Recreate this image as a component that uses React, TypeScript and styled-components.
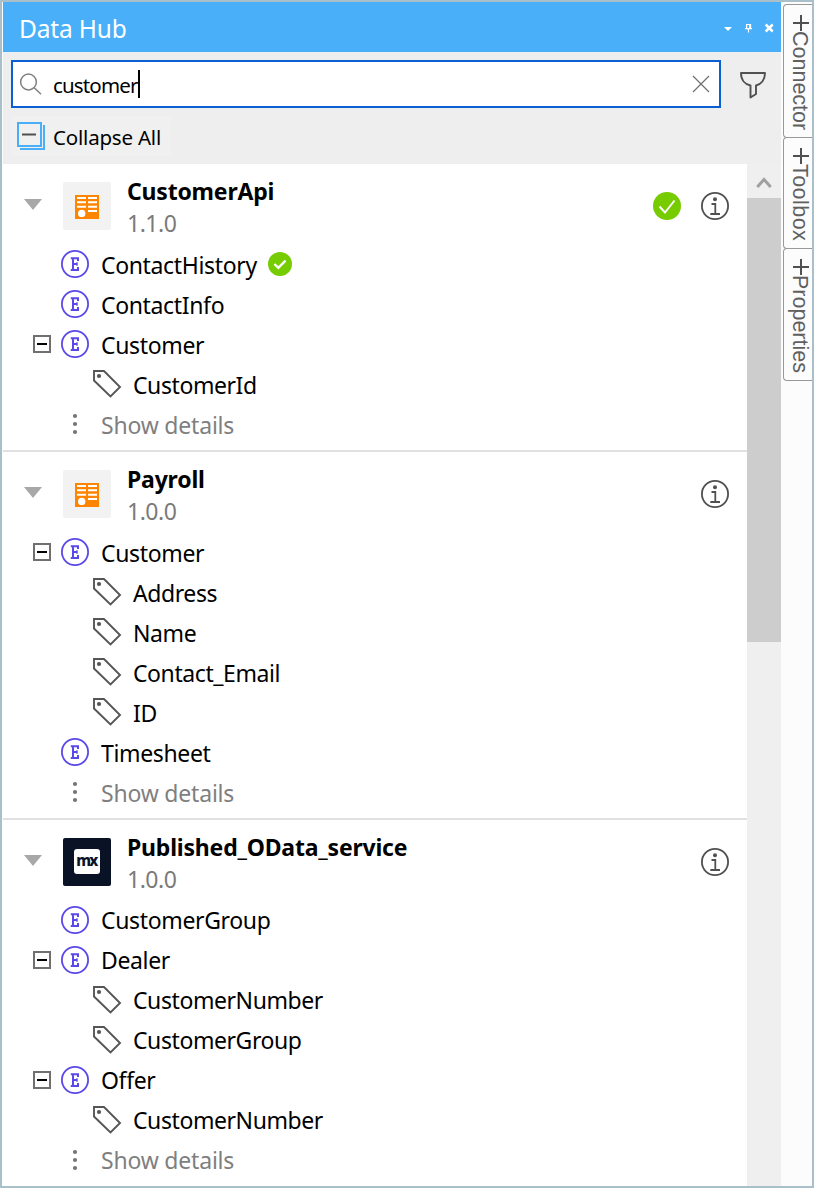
import React from 'react';
import styled, { createGlobalStyle } from 'styled-components';

const GlobalStyle = createGlobalStyle`
  * { box-sizing: border-box; }
  body { margin: 0; background: #fff; font-family: 'Noto Sans', sans-serif; }
  svg { display: block; flex: none; }
`;

const Window = styled.div`
  display: flex;
  width: 814px;
  height: 1188px;
  border: 2px solid #a9bfca;
  padding-left: 1px;
  background: #fcfcfc;
  overflow: hidden;
`;

const Panel = styled.section`
  display: flex;
  flex-direction: column;
  width: 778px;
`;

const TitleBar = styled.header`
  display: flex;
  align-items: center;
  height: 50px;
  padding: 0 7px 0 16px;
  background: #49aff8;
  color: #fff;
`;

const PanelTitle = styled.h1`
  flex: 1;
  margin: 0;
  padding-top: 4px;
  font-size: 24.5px;
  font-weight: 400;
  line-height: 46px;
  letter-spacing: -0.15px;
`;

const Toolbar = styled.div`
  height: 112px;
  padding: 8px 0 0 8px;
  background: #eeeeee;
`;

const SearchRow = styled.div`
  display: flex;
  align-items: center;
  height: 48px;
`;

const SearchBox = styled.div`
  display: flex;
  align-items: center;
  width: 710px;
  height: 48px;
  padding: 0 9px 0 6px;
  border: 2px solid #0a60d0;
  background: #fff;
`;

const Query = styled.span`
  flex: 1;
  display: flex;
  align-items: center;
  padding: 2px 0 0 11px;
  font-size: 20.5px;
  line-height: 42px;
  letter-spacing: -0.85px;
`;

const Caret = styled.i`
  width: 2px;
  height: 28px;
  margin-bottom: 2px;
  background: #000;
`;

const FilterButton = styled.div`
  display: flex;
  align-items: center;
  justify-content: center;
  width: 60px;
  height: 48px;
  padding: 2px 0 0 4px;
`;

const CollapseButton = styled.div`
  display: flex;
  align-items: center;
  gap: 8px;
  width: 160px;
  height: 40px;
  margin-top: 8px;
  padding-left: 6px;
  background: #f0f0f0;
  font-size: 20.5px;
  letter-spacing: -0.2px;
  white-space: nowrap;
`;

const CollapseText = styled.span`
  padding-top: 2px;
`;

const Content = styled.div`
  display: flex;
  flex: 1;
`;

const List = styled.div`
  width: 744px;
  background: #fff;
`;

const Scrollbar = styled.div`
  width: 34px;
  background: #efefef;
`;

const ScrollUp = styled.div`
  display: flex;
  align-items: center;
  justify-content: center;
  height: 34px;
  padding-top: 4px;
`;

const Thumb = styled.div`
  height: 444px;
  background: #cdcdcd;
`;

const ServiceHead = styled.div`
  display: flex;
  align-items: flex-start;
  height: 80px;
  padding: 18px 18px 0 21px;
`;

const Arrow = styled.svg`
  margin: 17px 21px 0 0;
`;

const Logo = styled.div<{ $dark?: boolean }>`
  display: flex;
  align-items: center;
  justify-content: center;
  width: 48px;
  height: 48px;
  padding-top: ${p => (p.$dark ? 0 : 2)}px;
  border-radius: 2px;
  background: ${p => (p.$dark ? '#0a1326' : '#f2f2f2')};
`;

const MxBadge = styled.div`
  width: 26px;
  height: 25px;
  margin-bottom: 2px;
  border-radius: 3px;
  background: #fff;
  color: #0a1326;
  font-size: 15px;
  font-weight: 800;
  line-height: 22px;
  letter-spacing: -1.7px;
  text-indent: -1px;
  text-align: center;
`;

const Heading = styled.div`
  flex: 1;
  padding-left: 16px;
`;

const Name = styled.div`
  margin-top: -7px;
  font-size: 23px;
  font-weight: 700;
  line-height: 32px;
  letter-spacing: -0.2px;
`;

const Version = styled.div`
  font-size: 23px;
  line-height: 32px;
  letter-spacing: -0.5px;
  color: #7a7a7a;
`;

const Status = styled.div`
  display: flex;
  gap: 20px;
  padding-top: 10px;
`;

const Label = styled.span`
  padding: 2px 11px 0 12px;
  font-size: 23px;
  line-height: 36px;
`;

const Row = styled.div<{ $indent?: boolean; $muted?: boolean }>`
  display: flex;
  align-items: center;
  height: 40px;
  padding-left: ${p => (p.$indent ? 89 : 30)}px;
  color: ${p => (p.$muted ? '#7f7f7f' : '#000')};

  ${Label} {
    padding-left: ${p => (p.$indent ? 11 : 12)}px;
    letter-spacing: ${p => (p.$muted ? -0.2 : p.$indent ? -0.42 : -0.35)}px;
  }
`;

const Service = styled.article<{ $last?: boolean }>`
  padding-bottom: 6px;
  border-bottom: ${p => (p.$last ? 'none' : '2px solid #e0e0e0')};

  ${Label} {
    padding-top: ${p => (p.$last ? 0 : 2)}px;
  }
`;

const Toggle = styled.div`
  width: 28px;
`;

const Tabs = styled.aside`
  width: 31px;
  padding: 2px 0 0 2px;
`;

const Tab = styled.div<{ $height: number }>`
  display: flex;
  flex-direction: column;
  align-items: flex-start;
  height: ${p => p.$height}px;
  padding: 10px 0 0 9px;
  border: 1px solid #999;
  border-right: 0;
  border-top-left-radius: 4px;
  border-bottom-left-radius: 4px;
  margin-bottom: -1px;
`;

const TabText = styled.span<{ $spacing?: number }>`
  margin: -1px 0 0 -6px;
  writing-mode: vertical-rl;
  font-family: 'Liberation Sans', sans-serif;
  font-size: 21.5px;
  font-kerning: none;
  line-height: 26px;
  letter-spacing: ${p => p.$spacing ?? 0}px;
  color: #606060;
`;

const CheckIcon = ({ size }: { size: number }) => (
  <svg width={size} height={size} viewBox="0 0 28 28">
    <circle cx="14" cy="14" r="14" fill="#76cc00" />
    <path
      d={size > 25 ? 'M6.5 14.5 L12 20.5 L21.5 8.5' : 'M7.5 14 L12 18.5 L20.5 10'}
      fill="none"
      stroke="#fff"
      strokeWidth={size > 25 ? 1.9 : 2.7}
    />
  </svg>
);

const InfoIcon = () => (
  <svg width="28" height="28" viewBox="0 0 28 28" fill="none" stroke="#505050">
    <circle cx="14" cy="14" r="13.1" strokeWidth="1.8" />
    <circle cx="14" cy="7.2" r="2" fill="#505050" stroke="none" />
    <path d="M10.5 12H14.3V22M9.3 22H19" strokeWidth="1.8" />
  </svg>
);

const EntityIcon = () => (
  <svg width="28" height="28" viewBox="0 0 28 28" fill="none" stroke="#5b48e8">
    <circle cx="14" cy="14" r="13.1" strokeWidth="1.8" />
    <path d="M9.8 8.2H17V11M9.8 20H17V17M12 8.2V20M12 14H16" strokeWidth="2" />
    <path d="M16 12.2V15.8" strokeWidth="1.4" />
  </svg>
);

const TagIcon = () => (
  <svg width="30" height="30" viewBox="0 0 30 30" fill="none" stroke="#555">
    <path d="M2 2H12L28 18L18.5 27.5L2 11.5Z" strokeWidth="1.9" />
    <circle cx="7" cy="7" r="2.1" fill="#555" stroke="none" />
  </svg>
);

const MinusBox = () => (
  <svg width="18" height="18" viewBox="0 0 18 18">
    <rect x="1" y="1" width="16" height="16" fill="#fff" stroke="#707070" strokeWidth="2" />
    <path d="M4 9H14" stroke="#000" strokeWidth="2" />
  </svg>
);

const DotsIcon = () => (
  <svg width="28" height="28" viewBox="0 0 28 28" fill="#757575">
    <circle cx="14" cy="6" r="2.1" />
    <circle cx="14" cy="14" r="2.1" />
    <circle cx="14" cy="22" r="2.1" />
  </svg>
);

const ServiceIcon = () => (
  <svg width="24" height="24" viewBox="0 0 24 24">
    <path fill="#ff8500" d="M0 0H24V24H0Z" />
    <path stroke="#fff" strokeWidth="2" d="M2 3H11M13 3H22M2 7.3H11M13 7.3H22M2 11.7H11M13 11.7H22M13 16H22" />
    <circle cx="6.7" cy="18.4" r="3.7" fill="#fff" />
  </svg>
);

const PlusIcon = () => (
  <svg width="16" height="17" viewBox="0 0 16 17">
    <path d="M0 8H16M8 0V16" stroke="#505050" strokeWidth="2" />
  </svg>
);

type Item = { kind: 'entity' | 'attribute'; name: string; open?: boolean; checked?: boolean };
type ServiceData = { name: string; version: string; logo: 'service' | 'mx'; checked?: boolean; items: Item[] };

const entity = (name: string, extra: Partial<Item> = {}): Item => ({ kind: 'entity', name, ...extra });
const attribute = (name: string): Item => ({ kind: 'attribute', name });

const services: ServiceData[] = [
  {
    name: 'CustomerApi',
    version: '1.1.0',
    logo: 'service',
    checked: true,
    items: [
      entity('ContactHistory', { checked: true }),
      entity('ContactInfo'),
      entity('Customer', { open: true }),
      attribute('CustomerId'),
    ],
  },
  {
    name: 'Payroll',
    version: '1.0.0',
    logo: 'service',
    items: [
      entity('Customer', { open: true }),
      attribute('Address'),
      attribute('Name'),
      attribute('Contact_Email'),
      attribute('ID'),
      entity('Timesheet'),
    ],
  },
  {
    name: 'Published_OData_service',
    version: '1.0.0',
    logo: 'mx',
    items: [
      entity('CustomerGroup'),
      entity('Dealer', { open: true }),
      attribute('CustomerNumber'),
      attribute('CustomerGroup'),
      entity('Offer', { open: true }),
      attribute('CustomerNumber'),
    ],
  },
];

const ItemRow = ({ item }: { item: Item }) =>
  item.kind === 'attribute' ? (
    <Row $indent>
      <TagIcon />
      <Label>{item.name}</Label>
    </Row>
  ) : (
    <Row>
      <Toggle>{item.open && <MinusBox />}</Toggle>
      <EntityIcon />
      <Label>{item.name}</Label>
      {item.checked && <CheckIcon size={24} />}
    </Row>
  );

const ServiceBlock = ({ data, last }: { data: ServiceData; last: boolean }) => (
  <Service $last={last}>
    <ServiceHead>
      <Arrow width="18" height="11" viewBox="0 0 18 11">
        <path d="M0 0H18L9 11Z" fill="#a8a8a8" />
      </Arrow>
      <Logo $dark={data.logo === 'mx'}>
        {data.logo === 'mx' ? <MxBadge>mx</MxBadge> : <ServiceIcon />}
      </Logo>
      <Heading>
        <Name>{data.name}</Name>
        <Version>{data.version}</Version>
      </Heading>
      <Status>
        {data.checked && <CheckIcon size={28} />}
        <InfoIcon />
      </Status>
    </ServiceHead>
    {data.items.map((item, i) => (
      <ItemRow key={i} item={item} />
    ))}
    <Row $muted>
      <Toggle />
      <DotsIcon />
      <Label>Show details</Label>
    </Row>
  </Service>
);

export default function App() {
  return (
    <>
      <GlobalStyle />
      <Window>
        <Panel>
          <TitleBar>
            <PanelTitle>Data Hub</PanelTitle>
            <svg width="50" height="16" viewBox="0 0 50 16">
              <path d="M0 8H8L4 12Z" fill="#fff" />
              <path d="M22.6 9.5V5.5H26V9.5M21 9.7H28M24.5 9.7V13.5" fill="none" stroke="#fff" strokeWidth="1.2" />
              <path d="M26.2 5V9.5" stroke="#fff" strokeWidth="2" />
              <path d="M41.7 5.5L48.7 12.5M48.7 5.5L41.7 12.5" stroke="#fff" strokeWidth="2.5" />
            </svg>
          </TitleBar>
          <Toolbar>
            <SearchRow>
              <SearchBox>
                <svg width="23" height="22" viewBox="0 0 23 22" fill="none" stroke="#808080" strokeWidth="1.5">
                  <circle cx="9.5" cy="9" r="7.9" />
                  <path d="M15 14.5L22 21.3" />
                </svg>
                <Query>
                  customer
                  <Caret />
                </Query>
                <svg width="18" height="18" viewBox="0 0 18 18">
                  <path d="M1 1L17 17M17 1L1 17" stroke="#707070" strokeWidth="1.2" />
                </svg>
              </SearchBox>
              <FilterButton>
                <svg width="26" height="27" viewBox="0 0 26 27" fill="none" stroke="#505050" strokeWidth="1.9">
                  <path d="M1 1H25C25 8 21 12.5 16 13.5V22L10.5 25.5V13.5C5 12.5 1 8 1 1Z" strokeLinejoin="round" />
                </svg>
              </FilterButton>
            </SearchRow>
            <CollapseButton>
              <svg width="28" height="28" viewBox="0 0 28 28" fill="none" stroke="#49aff8" strokeWidth="2">
                <path d="M1 1H24V24H1ZM27 3V27H3" />
                <path d="M5 12.5H19" stroke="#505050" />
              </svg>
              <CollapseText>Collapse All</CollapseText>
            </CollapseButton>
          </Toolbar>
          <Content>
            <List>
              {services.map((s, i) => (
                <ServiceBlock key={s.name} data={s} last={i === services.length - 1} />
              ))}
            </List>
            <Scrollbar>
              <ScrollUp>
                <svg width="16" height="12" viewBox="0 0 16 12">
                  <path d="M1.3 10L8 2.5L14.7 10" fill="none" stroke="#a0a0a0" strokeWidth="3" />
                </svg>
              </ScrollUp>
              <Thumb />
            </Scrollbar>
          </Content>
        </Panel>
        <Tabs>
          <Tab $height={134}>
            <PlusIcon />
            <TabText>Connector</TabText>
          </Tab>
          <Tab $height={112}>
            <PlusIcon />
            <TabText $spacing={0.45}>Toolbox</TabText>
          </Tab>
          <Tab $height={133}>
            <PlusIcon />
            <TabText>Properties</TabText>
          </Tab>
        </Tabs>
      </Window>
    </>
  );
}
